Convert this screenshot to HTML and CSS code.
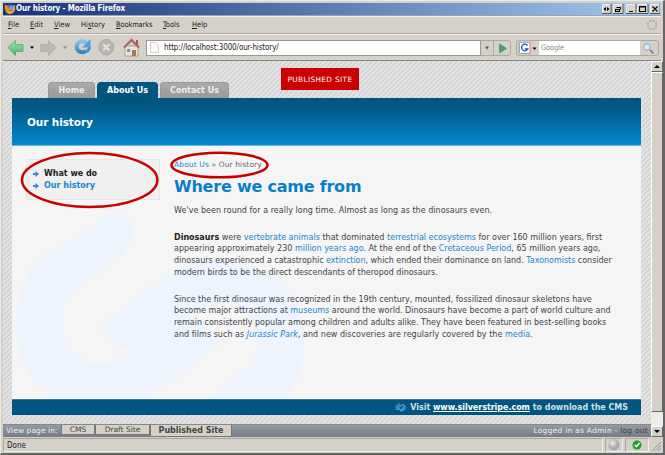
FILE: index.html
```html
<!DOCTYPE html>
<html lang="en"><head><meta charset="utf-8"><title>Our history</title><link rel="stylesheet" href="styles.css"></head>
<body><div class="window">
<div class="titlebar"><svg class="fox" viewBox="0 0 12 12"><circle cx="6" cy="6" r="5" fill="#2457a3"/><circle cx="7" cy="5" r="2.5" fill="#5aa3dc"/><path d="M1 1 3 3 5 2 4 4 7 6Q5 8 8 8Q10 7 10 2Q13 7 9 10Q5 13 2 9Q0 6 1 1" fill="#e88822"/><path d="M10 2Q11 7 8 9Q5 11 3 8" fill="none" stroke="#ffca55"/></svg><span class="t title">Our history - Mozilla Firefox</span>
<div class="controls"><svg viewBox="0 0 58 10"><g fill="#d8d4cc" stroke="#eee" stroke-width="1"><path d="M.5.5h8v9h-8zM11.500.5h9v9h-9zM24.500.5h9v9h-9zM35.500.5h10v9h-10zM48.500.5h9v9h-9z"/></g><path d="M0 9.500h9V0M11 9.500h10V0M24 9.500h10V0M35 9.500h11V0M48 9.500h10V0" fill="none" stroke="#555"/><path d="M4 3v4L1.500 5zM5 3v4l2.500-2zM27 7h4v1h-4z"/><path d="M14.500 3.500h4v2M13.500 5.500h4v2h-4zM37.500 2.500h6v5h-6zM37 3h7M50.500 2.500l5 5M55.500 2.500l-5 5" fill="none" stroke="#000" stroke-width="1.100"/></svg></div></div>
<div class="menu"><span class="t m1"><u>F</u>ile</span><span class="t m2"><u>E</u>dit</span><span class="t m3"><u>V</u>iew</span><span class="t m4">Hi<u>s</u>tory</span><span class="t m5"><u>B</u>ookmarks</span><span class="t m6"><u>T</u>ools</span><span class="t m7"><u>H</u>elp</span><svg class="throb" viewBox="0 0 12 12"><circle cx="6" cy="6" r="4.300" fill="none" stroke="#b3b1ae" stroke-width="2" stroke-dasharray="2.300 1.077"/></svg></div>
<div class="toolbar"><svg class="nav" viewBox="0 0 143 26">
<defs><linearGradient id="g" x2="0" y2="1"><stop stop-color="#9be5ae"/><stop offset="1" stop-color="#45b66a"/></linearGradient><linearGradient id="b" x2="0" y2="1"><stop stop-color="#7bc8ee"/><stop offset="1" stop-color="#2f86c9"/></linearGradient></defs>
<path d="M5 12.500 12.500 5.500v4H20v7h-7.500v4z" fill="url(#g)" stroke="#55a873" stroke-width=".8"/><path d="M27 11.500h4l-2 2.500z"/>
<path d="M53 12.500 45.500 5.500v4H37.500v7h8v4z" fill="#bbb9b5" stroke="#aaa9a6" stroke-width=".8"/><path d="M60 11.500h4l-2 2.500z" fill="#888"/>
<path d="M83.500 8A5.600 5.600 0 1 0 83.500 15.500" fill="none" stroke="url(#b)" stroke-width="4"/><path d="M84 16.500A6.500 6.500 0 0 0 86.500 12" fill="none" stroke="#3b92d2" stroke-width="3"/><path d="M87.500 4v8.500h-8.500z" fill="#4ba4dc"/>
<path d="M100.500 5h5.500l4.500 4.500v6l-4.500 4.500h-5.500l-4.500-4.500v-6z" transform="translate(0 -.3)" fill="#b7b5b2" stroke="#a9a8a5"/><path d="m100.200 9.300 6 6m0-6-6 6" stroke="#e4e2de" stroke-width="2"/>
<path d="M122 11h13v10h-13z" fill="#eee0d5" stroke="#99877c" stroke-width=".7"/><path d="M121 12.500 128.500 5l7.500 7.500" fill="none" stroke="#a36a5b" stroke-width="2.200"/><path d="M133 5h2v5h-2z" fill="#a55d4b"/><path d="M129 15h4v6h-4z" fill="#a87853"/><path d="M124 14h3v3h-3z" fill="#7796ad"/></svg>
<div class="address"><svg class="doc" viewBox="0 0 9 11"><path d="M.5.5h5l3 3v7h-8z" fill="#f8f8f8" stroke="#ccc"/></svg><span class="t url">http://localhost:3000/our-history/</span></div><div class="go"><svg viewBox="0 0 30 15"><path d="M0 0h30v15H0z" fill="#d5d1c8"/><path d="M4 5.500h4l-2 3z" fill="#555"/><path d="M12.500 0v15" stroke="#aaa"/><path d="m18.500 3 7 4.500-7 4.500z" fill="#43a565" stroke="#5f9d73"/></svg></div>
<div class="search"><svg class="goog" viewBox="0 0 22 15"><path d="M2 1.500h11v11H2z" fill="#fff"/><path d="M2 12V1.500h11" fill="none" stroke="#8fb2e6"/><path d="M13 1v12" stroke="#e07a70"/><path d="M2.500 2v10.500H13" fill="none" stroke="#7fbd83"/><path d="M10.500 4.500A3.300 3.300 0 1 0 10.800 8H8" fill="none" stroke="#2e4bb6" stroke-width="1.300"/><path d="M15.500 6.500h4l-2 2.500z"/></svg><div class="query"><span class="t q">Google</span></div><svg class="mag" viewBox="0 0 18 15"><circle cx="7" cy="6" r="3.300" fill="#d5edf9" stroke="#8faab9"/><path d="m10 9 3.500 3.500" stroke="#8b8782" stroke-width="2"/></svg></div></div>
<div class="view"><div class="page"><div class="tabs"><div class="tab home"><span class="t">Home</span></div><div class="tab about"><span class="t">About Us</span></div><div class="tab contact"><span class="t">Contact Us</span></div></div>
<div class="published"><span class="t">PUBLISHED SITE</span></div>
<div class="hero"><span class="t">Our history</span></div>
<div class="body"><svg class="mark" viewBox="12 146 629 253"><path d="M118 209Q138 219 131 240Q128 249 119 257L76 288C58 302 60 324 66 341C74 360 89 365 105 364Q121 362 130 350Q116 345 100 327L160 280C184 260 218 255 250 265C280 275 300 301 304 334Q306 372 286 399H208L248 368Q260 356 257 337C252 314 234 303 216 305Q203 307 193 317Q209 325 221 341L148 399H56C27 383 15 348 16 319C19 280 33 264 57 248Q87 232 118 209" fill="#edf4fd"/></svg>
<div class="side"><div class="item"><svg viewBox="0 0 6 6"><path d="M0 2h2.500V0L6 3 2.500 6V4H0z" fill="#4186ca"/></svg><span class="t s1">What we do</span></div><div class="item"><svg viewBox="0 0 6 6"><path d="M0 2h2.500V0L6 3 2.500 6V4H0z" fill="#4186ca"/></svg><span class="t s2">Our history</span></div></div>
<div class="article"><div class="crumb"><span class="t"><a>About Us</a> » Our history</span></div><h1><span class="t">Where we came from</span></h1>
<p><span class="t l1">We've been round for a really long time. Almost as long as the dinosaurs even.</span></p>
<p><span class="t l2"><b>Dinosaurs</b> were <a>vertebrate animals</a> that dominated <a>terrestrial ecosystems</a> for over 160 million years, first</span><span class="t l3">appearing approximately 230 <a>million years ago</a>. At the end of the <a>Cretaceous Period</a>, 65 million years ago,</span><span class="t l4">dinosaurs experienced a catastrophic <a>extinction</a>, which ended their dominance on land. <a>Taxonomists</a> consider</span><span class="t l5">modern birds to be the direct descendants of theropod dinosaurs.</span></p>
<p><span class="t l6">Since the first dinosaur was recognized in the 19th century, mounted, fossilized dinosaur skeletons have</span><span class="t l7">become major attractions at <a>museums</a> around the world. Dinosaurs have become a part of world culture and</span><span class="t l8">remain consistently popular among children and adults alike. They have been featured in best-selling books</span><span class="t l9">and films such as <a><i>Jurassic Park</i></a>, and new discoveries are regularly covered by the <a>media</a>.</span></p></div>
<svg class="rings" viewBox="12 146 629 253"><g fill="none" stroke="#c90000" stroke-width="2.500"><ellipse cx="89.700" cy="180" rx="67.700" ry="27"/><ellipse cx="219.500" cy="165" rx="48" ry="12.300"/></g></svg></div>
<div class="foot"><svg viewBox="0 0 10 8"><path d="M4.500.8 1.800 2.500Q0 4 1.800 5.500 3 6.300 4.200 5.300L2.800 4 6 1.900Q7.800 1 9 2.800 9.800 5 8 6L5.500 7.500M4.500 7 7.300 5Q8 4 7 3.200" fill="none" stroke="#3f9bd0" stroke-width="1.300"/></svg><span class="t">Visit <u>www.silverstripe.com</u> to download the CMS</span></div></div>
<div class="scroll"><div class="sb up"></div><div class="thumb"></div><div class="sb down"></div></div>
<div class="admin"><span class="t v1">View page in:</span><div class="at a1"><span class="t">CMS</span></div><div class="at a2"><span class="t">Draft Site</span></div><div class="at a3"><span class="t">Published Site</span></div><span class="t log">Logged in as Admin - <em>log out</em></span></div></div>
<div class="status"><div class="done"><span class="t">Done</span></div><div class="cell"><svg viewBox="0 0 12 12"><defs><radialGradient id="r" cx=".35" cy=".3"><stop stop-color="#eee"/><stop offset="1" stop-color="#aaa"/></radialGradient></defs><circle cx="6" cy="6" r="5.300" fill="url(#r)" stroke="#aaa" stroke-width=".5"/></svg></div><div class="cell ok"><svg viewBox="0 0 12 12"><circle cx="6" cy="6" r="4.500" fill="#16a51d"/><path d="m3.800 6 1.700 1.700L8.500 4" fill="none" stroke="#fff" stroke-width="1.500"/></svg></div><svg class="grip" viewBox="0 0 10 12"><path d="m1 12 9-9M4 12l6-6M7 12l3-3" stroke="#999"/></svg></div>
</div></body></html>
```
FILE: styles.css
```css
*{box-sizing:border-box}
body{margin:0;width:665px;height:455px;overflow:hidden;font:8px/12px "DejaVu Sans",sans-serif;color:#444}
svg{display:block;flex:none}
.t{display:block;width:max-content;white-space:nowrap}
.window{width:665px;height:455px;background:#d5d1c8;border:1px solid #eceae5;border-right:2px solid #666;border-bottom:2px solid #666;padding:2px 2px 0;display:flex;flex-direction:column}
.titlebar{height:13px;flex:none;background:linear-gradient(90deg,#15317a,#a5caf0);display:flex;align-items:center;padding-left:1px;border-bottom:1px solid #98a4b5}
.fox{width:12px;height:12px}
.title{font:bold 8px/12px "DejaVu Sans Condensed","DejaVu Sans",sans-serif;color:#fff;letter-spacing:-.15px}
.controls{width:58px;margin-left:auto;margin-right:1px}
.controls svg{width:58px;height:10px}
.menu{height:18px;flex:none;border-top:1px solid #f6f4f0;border-bottom:1px solid #aaa69f;display:grid;grid-template-columns:22px 24px 27px 35px 47px 29px 1fr 12px;align-items:center;padding:0 3px 0 5px;font:7.500px/12px "DejaVu Sans Condensed","DejaVu Sans",sans-serif;color:#222}
.m5{letter-spacing:-.15px}
.throb{width:12px;height:12px}
.toolbar{height:27px;flex:none;border-top:1px solid #f6f4f0;border-bottom:1px solid #888681;display:flex;align-items:center;color:#222}
.nav{width:143px;height:26px}
.address{width:335px;height:16px;border:1px solid #999;background:#fff;display:flex;align-items:center;padding-left:3px}
.doc{width:9px;height:11px}
.url{font:8px/12px "DejaVu Sans Condensed","DejaVu Sans",sans-serif;margin-left:5px;letter-spacing:-.12px}
.go{width:30px;height:16px;border:1px solid #aaa;border-left:0;border-radius:0 4px 4px 0;overflow:hidden}
.go svg{width:30px;height:15px}
.search{margin-left:5px;width:143px;height:16px;border:1px solid #aaa;border-radius:3px;display:flex}
.goog{width:22px;height:15px}
.query{width:102px;background:#fff;padding:1px 2px;font:7.500px/12px "DejaVu Sans Condensed","DejaVu Sans",sans-serif;color:#888}
.q{letter-spacing:-.15px}
.mag{width:18px;height:15px}
.view{height:376px;flex:none;display:grid;grid-template:363px 13px / 648px 12px;background:repeating-linear-gradient(135deg,#e2e2e2 0 2.300px,#cecece 3.100px 3.536px)}
.page{position:relative;padding:21px 10px 0 9px}
.tabs{display:flex;padding-left:36px;gap:2px;height:16px;font-weight:bold}
.tab{height:16px;border-radius:4px 4px 0 0;background:linear-gradient(#aaa,#999);color:#eee;display:flex;justify-content:center;border:1px solid #999;border-bottom:0;line-height:15px}
.home{width:47px}
.about{width:61px;background:#005581;border-color:#005581;color:#fff}
.contact{width:69px}
.published{position:absolute;left:278px;top:7px;width:78px;height:22px;background:#c00;color:#fff;font-size:7.300px;letter-spacing:.39px;line-height:23px;display:flex;justify-content:center}
.hero{height:48px;background:linear-gradient(#005581 15%,#0587d0);border-bottom:1px solid #65b8e5;padding:18px 0 0 15px;color:#fff;font:bold 10.500px/13px "DejaVu Sans",sans-serif}
.hero .t{letter-spacing:-.1px}
.body{position:relative;height:253px;background:#f5f5f5;padding:13px 0 0 14px;display:flex;gap:14px}
.mark,.rings{position:absolute;left:0;top:0;width:629px;height:253px}
.side{position:relative;width:134px;height:41px;background:#f0f0f0;border:1px solid #e5e5e5;padding:8px 0 0 6px;font-weight:bold}
.item{height:12px;display:flex;align-items:center;gap:5px}
.item svg{width:6px;height:6px}
.s1{color:#222;letter-spacing:-.03px}
.s2,a{color:#2087c8}
.article{position:relative;width:440px}
.crumb{font-size:7.500px;letter-spacing:.12px;color:#666;height:12px}
h1{font:bold 16px/20px "DejaVu Sans",sans-serif;letter-spacing:-.22px;color:#087fc8;margin:6px 0 8px}
p{margin:0 0 15px;line-height:11.700px;color:#444}
b{color:#222}
.l1{letter-spacing:.025px}
.l4,.l6{letter-spacing:-.02px}
.l8,.l7{letter-spacing:-.01px}
.l9{letter-spacing:.03px}
.foot{height:16px;background:#005581;border-top:1px solid #37779a;color:#cce1ec;font-weight:bold;display:flex;align-items:center;justify-content:flex-end;gap:4px;padding-right:13px}
.foot .t{letter-spacing:-.03px}
.foot svg{width:11px;height:9px}
.foot u{color:#fff}
.scroll{grid-column:2;grid-row:1/3;background:#eeece8;display:flex;flex-direction:column}
.sb{height:11px;background:#d5d1c8;border:1px solid #fff;border-right-color:#666;border-bottom-color:#666;display:grid;place-items:center}
.sb::after{content:"";border:3px solid transparent;border-bottom:3px solid #000;border-top:0}
.down::after{border-top:3px solid #000;border-bottom:0}
.thumb{height:340px;background:#d5d1c8;border:1px solid #fff;border-right-color:#666;border-bottom-color:#666}
.down{margin-top:auto}
.admin{grid-column:1;grid-row:2;background:linear-gradient(#929aa4,#777c87);border-top:1px solid #888;display:flex;color:#eee;font-size:7.500px}
.v1{margin-left:3px;width:55px;letter-spacing:.08px}
.at{height:10px;background:#d5d1c8;border:1px solid #777;border-top:0;color:#444;line-height:9px;display:flex;justify-content:center}
.a1{width:34px}
.a2{width:55px}
.a3{width:82px;height:12px;font-weight:bold;font-size:8px;line-height:11px}
.log{margin-left:auto;margin-right:3px;letter-spacing:.25px}
em{font-style:normal;color:#444}
.status{height:16px;margin-top:1px;display:flex;gap:2px;color:#222;font:8px/13px "DejaVu Sans Condensed","DejaVu Sans",sans-serif}
.done,.cell{height:14px;border:1px solid #aaa69f;border-right-color:#eee;border-bottom-color:#eee}
.done{width:601px;padding-left:3px}
.cell{width:18px;padding-left:2px}
.ok{width:24px;padding-left:5px}
.cell svg{width:12px;height:12px}
.grip{width:10px;height:14px}
```
